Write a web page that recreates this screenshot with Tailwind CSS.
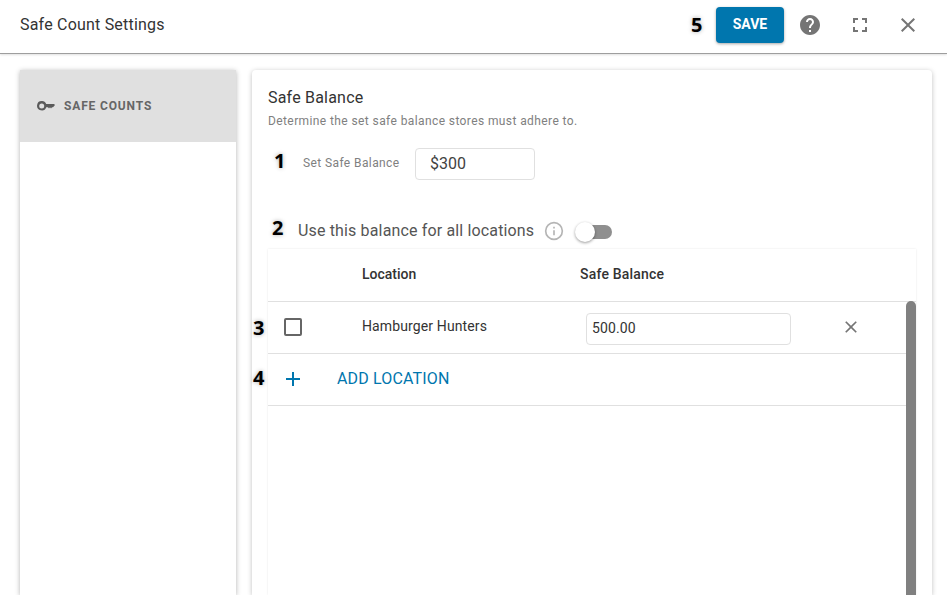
<!DOCTYPE html>
<html lang="en">
<head>
    <meta charset="UTF-8">
    <title>Safe Count Settings</title>
    <script src="https://cdn.jsdelivr.net/npm/@tailwindcss/browser@4"></script>
</head>
<body class="w-[947px] h-[595px] overflow-hidden bg-white font-['Roboto',sans-serif] relative">
    <!-- Header -->
    <header class="h-[54px] flex items-center border-b border-[#9e9e9e] shadow-[0_1px_2px_rgba(0,0,0,0.12)] pl-5 pr-[27px] pb-1 relative z-10 bg-white">
        <h1 class="text-[16px] text-[#333] tracking-[0.2px]">Safe Count Settings</h1>
        <div class="ml-auto flex items-center">
            <button class="w-[68px] h-9 bg-[#0076ae] text-white text-[14px] font-bold rounded shadow-[0_1px_3px_rgba(0,0,0,0.35)]">SAVE</button>
            <svg class="w-6 h-6 ml-[14px]" viewBox="0 0 24 24" fill="#757575"><path d="M12 2C6.48 2 2 6.48 2 12s4.48 10 10 10 10-4.48 10-10S17.52 2 12 2zm1 17h-2v-2h2v2zm2.07-7.75-.9.92C13.45 12.9 13 13.5 13 15h-2v-.5c0-1.1.45-2.1 1.17-2.83l1.24-1.26c.37-.36.59-.86.59-1.41 0-1.1-.9-2-2-2s-2 .9-2 2H8c0-2.21 1.79-4 4-4s4 1.790 4 4c0 .88-.36 1.680-.93 2.250z"/></svg>
            <svg class="w-6 h-6 ml-[26px]" viewBox="0 0 24 24" fill="#757575"><path d="M7 14H5v5h5v-2H7v-3zm-2-4h2V7h3V5H5v5zm12 7h-3v2h5v-5h-2v3zM14 5v2h3v3h2V5h-5z"/></svg>
            <svg class="w-6 h-6 ml-6" viewBox="0 0 24 24" fill="#757575"><path d="M19 6.410 17.590 5 12 10.590 6.410 5 5 6.410 10.590 12 5 17.590 6.410 19 12 13.410 17.590 19 19 17.590 13.410 12z"/></svg>
        </div>
    </header>

    <div class="flex gap-4 pl-5 pr-[15px] pt-4">
        <!-- Sidebar -->
        <aside class="w-[216px] h-[525px] shrink-0 bg-white shadow-[0_1px_5px_rgba(0,0,0,0.3)]">
            <div class="h-[72px] bg-[#e0e0e0] flex items-center pl-[17px]">
                <svg class="w-[18px] h-[10px]" viewBox="0 0 18 10" fill="#5a5a5a"><path fill-rule="evenodd" d="M4.700 0a4.700 4.700 0 1 0 4.500 6.200H11l1 1.200 1-1.200 1 1.200 1-1.200h1l2-2.200-1-1H9.200A4.700 4.700 0 0 0 4.700 0zm0 2.500a2.500 2.500 0 1 1 0 5 2.500 2.500 0 0 1 0-5z"/></svg>
                <span class="ml-[9px] text-[12px] font-bold text-[#666] tracking-[0.85px]">SAFE COUNTS</span>
            </div>
        </aside>

        <!-- Main card -->
        <main class="flex-1 h-[525px] bg-white rounded-t shadow-[0_1px_5px_rgba(0,0,0,0.25)] pt-[19px] px-4">
            <h2 class="text-[16px] leading-[17px] text-[#333] tracking-[0.2px]">Safe Balance</h2>
            <p class="text-[12px] leading-[14px] mt-2 text-[#808080] tracking-[0.4px]">Determine the set safe balance stores must adhere to.</p>

            <div class="flex items-center mt-5 pl-[35px]">
                <span class="w-[112px] text-[12px] text-[#808080] tracking-[0.4px] -translate-y-px">Set Safe Balance</span>
                <div class="w-[120px] h-8 border border-[#e0e0e0] rounded flex items-center pl-[14px] text-[16px] text-[#424242]">$300</div>
            </div>

            <div class="flex items-center mt-[41px] pl-[30px] h-5">
                <span class="text-[16px] text-[#555] tracking-[0.15px]">Use this balance for all locations</span>
                <svg class="w-5 h-5 ml-[10px]" viewBox="0 0 24 24" fill="none" stroke="#b5b5b5" stroke-width="2"><circle cx="12" cy="12" r="10"/><path d="M12 11v6M12 7v2"/></svg>
                <div class="relative ml-[13px] mt-[2px] w-[35px] h-[14px] rounded-full bg-[#8f8f8f]">
                    <div class="absolute left-[-2px] top-[-3px] w-5 h-5 rounded-full bg-white shadow-[0_1px_3px_rgba(0,0,0,0.4)]"></div>
                </div>
            </div>

            <!-- Table -->
            <div class="relative mt-2 h-[346px] shadow-[0_0_2px_rgba(0,0,0,0.1)]">
                <div class="h-[53px] flex items-center border-b border-[#e0e0e0] pb-[2px] text-[14px] font-medium text-[#333]">
                    <span class="ml-[94px] w-[218px]">Location</span>
                    <span class="tracking-[0.2px]">Safe Balance</span>
                </div>
                <div class="h-[52px] flex items-center border-b border-[#e0e0e0] pr-[11px]">
                    <div class="ml-4 mb-[2px] w-[18px] h-[18px] border-2 border-[#666] rounded-[2px]"></div>
                    <span class="ml-[60px] w-[224px] text-[14px] text-[#333] tracking-[0.12px] -translate-y-px">Hamburger Hunters</span>
                    <div class="w-[205px] h-8 mt-[2px] border border-[#e0e0e0] rounded flex items-center pl-[5px] text-[14px] text-[#333] tracking-[0.1px]">500.00</div>
                    <svg class="w-5 h-5 ml-[50px] mb-[2px]" viewBox="0 0 24 24" fill="#757575"><path d="M19 6.410 17.590 5 12 10.590 6.410 5 5 6.410 10.590 12 5 17.590 6.410 19 12 13.410 17.590 19 19 17.590 13.410 12z"/></svg>
                </div>
                <div class="h-[52px] flex items-center border-b border-[#e0e0e0] pb-[2px]">
                    <svg class="w-6 h-6 ml-[13px]" viewBox="0 0 24 24" fill="#0076ae"><path d="M19 13h-6v6h-2v-6H5v-2h6V5h2v6h6z"/></svg>
                    <span class="ml-[32px] text-[16px] text-[#0076ae] tracking-[0.15px]">ADD LOCATION</span>
                </div>
                <div class="absolute right-0 top-[52px] bottom-0 w-[10px] rounded-t-md bg-[#808080]"></div>
            </div>
        </main>
    </div>

    <!-- Numbered callouts added on top of the screenshot -->
    <span class="absolute left-[274px] top-[149px] text-[20px] leading-6 font-bold text-black font-['Open_Sans',sans-serif] [text-shadow:0_0_4px_#aaa]">1</span>
    <span class="absolute left-[272px] top-[216px] text-[20px] leading-6 font-bold text-black font-['Open_Sans',sans-serif] [text-shadow:0_0_4px_#aaa]">2</span>
    <span class="absolute left-[253px] top-[316px] text-[20px] leading-6 font-bold text-black font-['Open_Sans',sans-serif] [text-shadow:0_0_4px_#aaa]">3</span>
    <span class="absolute left-[253px] top-[366px] text-[20px] leading-6 font-bold text-black font-['Open_Sans',sans-serif] [text-shadow:0_0_4px_#aaa]">4</span>
    <span class="absolute left-[691px] top-[13px] z-20 text-[20px] leading-6 font-bold text-black font-['Open_Sans',sans-serif] [text-shadow:0_0_4px_#aaa]">5</span>
</body>
</html>
